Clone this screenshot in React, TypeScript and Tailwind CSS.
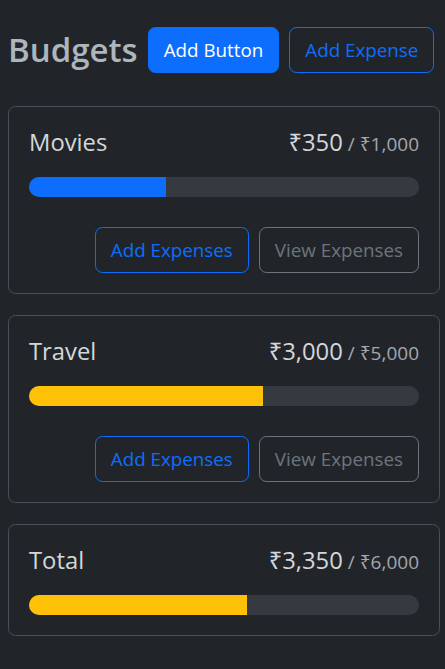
import React from 'react';

const fmt = (n: number) => '₹' + n.toLocaleString('en-IN');

interface BudgetCardProps {
  name: string;
  amount: number;
  max: number;
  hideButtons?: boolean;
}

const BudgetCard: React.FC<BudgetCardProps> = ({ name, amount, max, hideButtons = false }) => {
  const ratio = amount / max;
  const barColor = ratio < 0.5 ? 'bg-[#0d6efd]' : ratio < 0.75 ? 'bg-[#ffc107]' : 'bg-[#dc3545]';

  return (
    <div className="border border-[#495057] rounded-[7.5px] p-5">
      {/* Title */}
      <div className="flex justify-between items-baseline h-[30px] text-[23.8px] leading-[30px] mb-5">
        <div className="mr-[10px]">{name}</div>
        <div className="flex items-baseline whitespace-nowrap">
          {fmt(amount)}
          <span className="text-[19px] text-[#a3a8ad] ml-[5px]">/ {fmt(max)}</span>
        </div>
      </div>

      {/* Progress */}
      <div className="h-5 rounded-full bg-[#343a40] overflow-hidden flex">
        <div className={`h-full ${barColor}`} style={{ width: `${ratio * 100}%` }} />
      </div>

      {!hideButtons && (
        <div className="flex justify-end gap-[10px] mt-[30px]">
          <button className="px-[15px] py-[7px] text-[18.8px] leading-[30px] whitespace-nowrap border border-[#0d6efd] text-[#0d6efd] rounded-[7.5px]">
            Add Expenses
          </button>
          <button className="px-[15px] py-[7px] text-[18.8px] leading-[30px] whitespace-nowrap border border-[#6c757d] text-[#6c757d] rounded-[7.5px]">
            View Expenses
          </button>
        </div>
      )}
    </div>
  );
};

export default function App() {
  return (
    <div className="min-h-screen bg-[#212529] text-[#d3d7db] font-['Segoe_UI','Open_Sans','Noto_Sans',sans-serif]">
      <div className="pt-[27px] pl-2 pr-[5px]">
        {/* Header */}
        <div className="flex items-center gap-[10px] mb-[33px]">
          <h1 className="text-[33px] leading-[42px] font-semibold text-[#adb5bd] whitespace-nowrap">Budgets</h1>
          <button className="px-[15px] py-[7px] text-[18.8px] leading-[30px] whitespace-nowrap border border-[#0d6efd] bg-[#0d6efd] text-white rounded-[7.5px]">
            Add Button
          </button>
          <button className="px-[15px] py-[7px] text-[18.8px] leading-[30px] whitespace-nowrap border border-[#0d6efd] text-[#0d6efd] rounded-[7.5px]">
            Add Expense
          </button>
        </div>

        <div className="flex flex-col gap-[21px]">
          <BudgetCard name="Movies" amount={350} max={1000} />
          <BudgetCard name="Travel" amount={3000} max={5000} />
          <BudgetCard name="Total" amount={3350} max={6000} hideButtons />
        </div>
      </div>
    </div>
  );
}
